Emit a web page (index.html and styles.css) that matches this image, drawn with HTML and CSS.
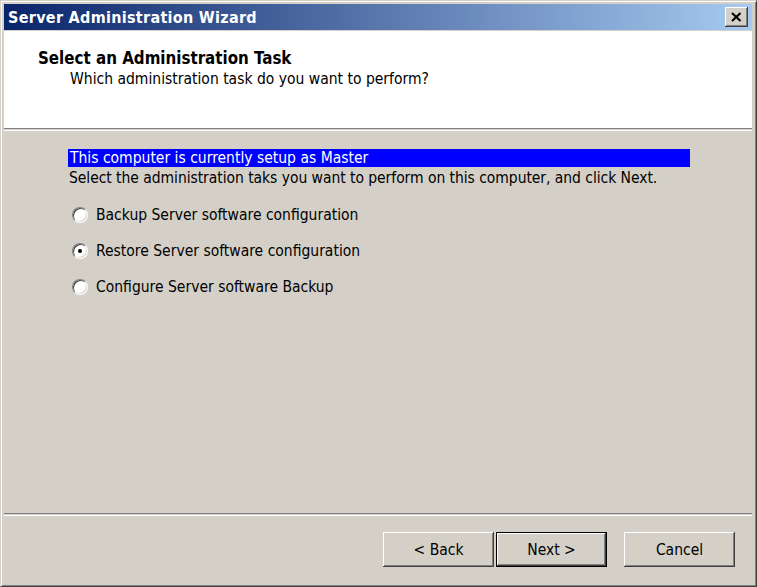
FILE: index.html
```html
<!DOCTYPE html>
<html>
<head>
<meta charset="utf-8">
<link rel="stylesheet" href="styles.css">
</head>
<body>
<div class="window">
  <div class="titlebar">
    <span class="title">Server Administration Wizard</span>
    <button class="close" aria-label="Close">
      <svg width="11" height="10" viewBox="0 0 11 10"><path d="M1 1 L9.5 9 M9.5 1 L1 9" stroke="#000" stroke-width="2.2" fill="none"/></svg>
    </button>
  </div>
  <div class="header">
    <div class="h-title">Select an Administration Task</div>
    <div class="h-sub">Which administration task do you want to perform?</div>
  </div>
  <div class="sep"></div>
  <div class="content">
    <div class="highlight">This computer is currently setup as Master</div>
    <div class="instr">Select the administration taks you want to perform on this computer, and click Next.</div>
    <div class="options">
      <div class="opt"><span class="radio"></span><span>Backup Server software configuration</span></div>
      <div class="opt"><span class="radio checked"></span><span>Restore Server software configuration</span></div>
      <div class="opt"><span class="radio"></span><span>Configure Server software Backup</span></div>
    </div>
  </div>
  <div class="sep"></div>
  <div class="buttons">
    <button class="btn">&lt; Back</button>
    <button class="btn default">Next &gt;</button>
    <button class="btn cancel">Cancel</button>
  </div>
</div>
</body>
</html>
```
FILE: styles.css
```css
html, body { margin: 0; padding: 0; background: #d4d0c8; }
body { width: 757px; height: 587px; overflow: hidden; }
.window {
  box-sizing: border-box;
  width: 757px; height: 587px;
  background: #d4d0c8;
  border-top: 1px solid #d4d0c8; border-left: 1px solid #d4d0c8;
  border-right: 1px solid #404040; border-bottom: 1px solid #404040;
  font-family: "DejaVu Sans Condensed", "Liberation Sans", sans-serif;
  font-size: 15.5px; color: #000;
  display: flex; flex-direction: column;
  box-shadow: inset 1px 1px 0 #fff, inset -1px -1px 0 #808080;
  padding: 3px 4px 3px 3px;
}
.titlebar {
  height: 26px; flex: none;
  background: linear-gradient(to right, #0a246a, #a6caf0);
  display: flex; align-items: center; justify-content: space-between;
  padding: 0 4px 0 4px;
}
.title { color: #fff; font-weight: bold; font-size: 16px; letter-spacing: 0.3px; }
.close {
  width: 23px; height: 20px; padding: 0; margin: 0;
  background: #d4d0c8; border: none;
  box-shadow: inset -1px -1px 0 #404040, inset 1px 1px 0 #fff, inset -2px -2px 0 #808080;
  display: flex; align-items: center; justify-content: center;
}
.header {
  margin-top: 1px;
  height: 97px; flex: none; background: #fff;
  padding: 17px 0 0 34px; box-sizing: border-box;
}
.h-title { font-weight: bold; font-size: 16.8px; line-height: 20px; }
.h-sub { margin: 2px 0 0 32px; line-height: 19px; }
.sep { height: 1px; border-top: 1px solid #808080; border-bottom: 1px solid #fff; flex: none; }
.content { flex: 1; padding: 18px 0 0 64px; }
.highlight { width: 622px; height: 18px; background: #0000ff; color: #fff; padding-left: 2px; box-sizing: border-box; line-height: 18px; }
.instr { margin-top: 2px; padding-left: 1px; line-height: 18px; letter-spacing: -0.05px; }
.options { display: flex; flex-direction: column; gap: 17px; margin-top: 18px; margin-left: 4px; }
.opt { display: flex; align-items: center; gap: 8px; height: 19px; }
.radio {
  width: 16px; height: 16px; border-radius: 50%; box-sizing: border-box; flex: none;
  background: #fff; position: relative;
  border: 1px solid; border-color: #808080 #fff #fff #808080;
  box-shadow: inset 1px 1px 0 #404040, inset -1px -1px 0 #d4d0c8;
}
.radio.checked::after {
  content: ""; position: absolute; left: 5px; top: 5px; width: 4px; height: 4px; border-radius: 50%; background: #000;
}
.buttons { height: 67px; flex: none; display: flex; align-items: flex-start; padding: 16px 0 0 379px; box-sizing: border-box; }
.btn {
  width: 111px; height: 35px; margin: 0; padding: 0;
  font-family: inherit; font-size: 15.5px; color: #000;
  background: #d4d0c8; border: none;
  box-shadow: inset -1px -1px 0 #404040, inset 1px 1px 0 #fff, inset -2px -2px 0 #808080;
}
.btn.default {
  margin-left: 2px;
  border: 1px solid #000;
}
.btn.cancel { margin-left: 17px; }
```
